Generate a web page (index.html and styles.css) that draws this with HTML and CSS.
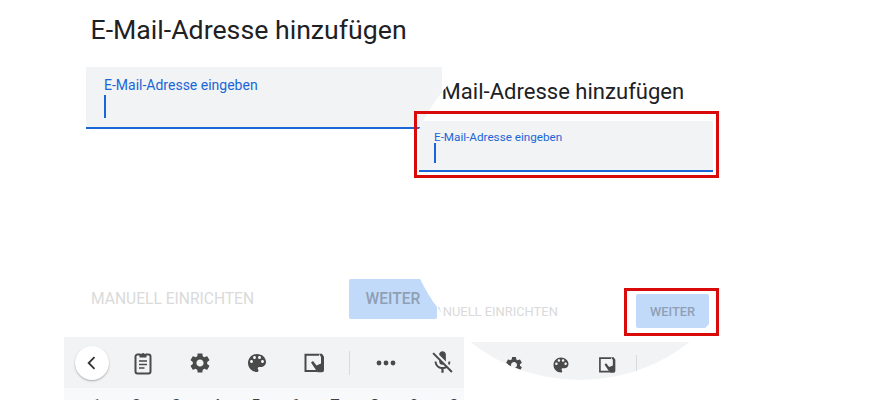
FILE: index.html
```html
<!DOCTYPE html>
<html lang="de">
<head>
<meta charset="utf-8">
<title>E-Mail-Adresse hinzufügen</title>
<link rel="stylesheet" href="styles.css">
</head>
<body>
<svg class="defs" width="0" height="0" aria-hidden="true">
  <symbol id="i-clip" viewBox="0 0 24 24">
    <path d="M9 3.500H6.500A2 2 0 0 0 4.500 5.500v15a2 2 0 0 0 2 2h11a2 2 0 0 0 2-2v-15a2 2 0 0 0-2-2H15" fill="none" stroke="currentColor" stroke-width="2"/>
    <path d="M8.500 2.800h2.200a1.400 1.400 0 0 1 2.600 0h2.200v3.700h-7z" fill="currentColor"/>
    <path d="M8 10h8M8 13.500h8M8 17h5.500" fill="none" stroke="currentColor" stroke-width="1.600"/>
  </symbol>
  <symbol id="i-gear" viewBox="0 0 24 24">
    <path fill-rule="evenodd" fill="currentColor" d="M19.140 12.940c.04-.3.06-.61.06-.94 0-.32-.02-.64-.07-.94l2.030-1.580c.18-.14.23-.41.12-.61l-1.920-3.320c-.12-.22-.37-.29-.59-.22l-2.390.96c-.5-.38-1.030-.7-1.620-.94l-.36-2.540c-.04-.24-.24-.41-.48-.41h-3.840c-.24 0-.43.17-.47.41l-.36 2.540c-.59.24-1.130.57-1.620.94l-2.390-.96c-.22-.08-.47 0-.59.22L2.740 8.870c-.12.21-.08.47.12.61l2.030 1.580c-.05.3-.09.63-.09.94s.02.64.07.94l-2.030 1.580c-.18.14-.23.41-.12.61l1.920 3.320c.12.22.37.29.59.22l2.390-.96c.5.38 1.030.7 1.620.94l.36 2.540c.05.24.24.41.48.41h3.840c.24 0 .44-.17.47-.41l.36-2.540c.59-.24 1.130-.56 1.620-.94l2.390.96c.22.08.47 0 .59-.22l1.920-3.320c.12-.22.07-.47-.12-.61l-2.010-1.580zM12 15.600c-1.980 0-3.600-1.620-3.600-3.600s1.620-3.600 3.600-3.600 3.600 1.620 3.600 3.600-1.620 3.600-3.600 3.600z"/>
  </symbol>
  <symbol id="i-palette" viewBox="0 0 24 24">
    <path fill-rule="evenodd" fill="currentColor" d="M12 3c-4.970 0-9 4.030-9 9s4.030 9 9 9c.83 0 1.500-.67 1.500-1.500 0-.39-.15-.74-.39-1.010-.23-.26-.38-.61-.38-.99 0-.83.67-1.500 1.500-1.500H16c2.760 0 5-2.240 5-5 0-4.420-4.030-8-9-8zm-5.500 9c-.83 0-1.500-.67-1.500-1.500S5.670 9 6.500 9 8 9.670 8 10.500 7.330 12 6.500 12zm3-4C8.670 8 8 7.330 8 6.500S8.670 5 9.500 5s1.500.67 1.500 1.500S10.330 8 9.500 8zm5 0c-.83 0-1.500-.67-1.500-1.500S13.670 5 14.500 5s1.500.67 1.500 1.500S15.330 8 14.500 8zm3 4c-.83 0-1.500-.67-1.500-1.500S16.670 9 17.500 9s1.500.67 1.500 1.500-.67 1.500-1.500 1.500z"/>
  </symbol>
  <symbol id="i-sticker" viewBox="0 0 24 24">
    <path d="M17 3.700H3.500V20H15" fill="none" stroke="currentColor" stroke-width="2"/>
    <path d="M17 2.700h3l2 3v13.500a2 2 0 0 1-2 2h-4.500L9 11.500l2-1.500 3.500 4.500 4.500-2V6z" fill="currentColor"/>
  </symbol>
  <symbol id="i-mic" viewBox="0 0 24 24">
    <path fill="currentColor" d="M19 11h-1.700c0 .74-.16 1.430-.43 2.050l1.230 1.230c.56-.98.9-2.090.9-3.280zm-4.020.17c0-.06.02-.11.02-.17V5c0-1.660-1.340-3-3-3S9 3.340 9 5v.18l5.980 5.990zM4.270 3L3 4.270l6.010 6.010V11c0 1.660 1.330 3 2.990 3 .22 0 .44-.03.65-.08l1.660 1.660c-.71.33-1.500.52-2.310.52-2.760 0-5.300-2.100-5.300-5.100H5c0 3.410 2.720 6.230 6 6.720V21h2v-3.280c.91-.13 1.770-.45 2.540-.9L19.730 21 21 19.730 4.270 3z"/>
  </symbol>
  <symbol id="i-dots" viewBox="0 0 24 24">
    <circle cx="5" cy="12" r="2.400" fill="currentColor"/>
    <circle cx="12" cy="12" r="2.400" fill="currentColor"/>
    <circle cx="19" cy="12" r="2.400" fill="currentColor"/>
  </symbol>
  <symbol id="i-back" viewBox="0 0 24 24">
    <path d="M15 5l-7 7 7 7" fill="none" stroke="currentColor" stroke-width="2.200"/>
  </symbol>
</svg>

<main class="stage">
  <section class="screen">
    <h1 class="title">E-Mail-Adresse hinzufügen</h1>
    <div class="field">
      <div class="field-label">E-Mail-Adresse eingeben</div>
      <div class="caret"></div>
    </div>
    <div class="actions">
      <span class="link">MANUELL EINRICHTEN</span>
      <button class="next" type="button">WEITER</button>
    </div>
    <div class="toolbar">
      <span class="back"><svg class="back-icon"><use href="#i-back"/></svg></span>
      <span class="tool"><svg class="icon"><use href="#i-clip"/></svg></span>
      <span class="tool"><svg class="icon"><use href="#i-gear"/></svg></span>
      <span class="tool"><svg class="icon"><use href="#i-palette"/></svg></span>
      <span class="tool"><svg class="icon"><use href="#i-sticker"/></svg></span>
      <span class="divider"></span>
      <span class="tool tool-dots"><svg class="icon"><use href="#i-dots"/></svg></span>
      <span class="tool"><svg class="icon icon-mic"><use href="#i-mic"/></svg></span>
    </div>
    <div class="digits">
      <span>1</span><span>2</span><span>3</span><span>4</span><span>5</span><span>6</span><span>7</span><span>8</span><span>9</span><span>0</span>
    </div>
  </section>

  <section class="lens">
    <h2 class="lens-title">E-Mail-Adresse hinzufügen</h2>
    <div class="lens-field">
      <div class="lens-label">E-Mail-Adresse eingeben</div>
      <div class="lens-caret"></div>
    </div>
    <div class="lens-actions">
      <span class="lens-link">MANUELL EINRICHTEN</span>
      <button class="lens-next" type="button">WEITER</button>
    </div>
    <div class="lens-toolbar">
      <span class="lens-back"><svg class="lens-back-icon"><use href="#i-back"/></svg></span>
      <span class="lens-tool"><svg class="lens-icon"><use href="#i-clip"/></svg></span>
      <span class="lens-tool"><svg class="lens-icon"><use href="#i-gear"/></svg></span>
      <span class="lens-tool"><svg class="lens-icon"><use href="#i-palette"/></svg></span>
      <span class="lens-tool"><svg class="lens-icon"><use href="#i-sticker"/></svg></span>
      <span class="lens-divider"></span>
      <span class="lens-tool lens-tool-dots"><svg class="lens-icon"><use href="#i-dots"/></svg></span>
      <span class="lens-tool"><svg class="lens-icon"><use href="#i-mic"/></svg></span>
    </div>
  </section>

  <div class="mark mark-field"></div>
  <div class="mark mark-next"></div>
</main>
</body>
</html>
```

FILE: styles.css
```css
* {
  box-sizing: border-box;
}

html,
body {
  margin: 0;
  background: #fff;
}

.defs {
  position: absolute;
}

.stage {
  position: relative;
  width: 879px;
  height: 400px;
  overflow: hidden;
  font-family: Roboto, "Liberation Sans", sans-serif;
}

/* Main screen */
.screen {
  position: absolute;
  left: 64px;
  top: 0;
  width: 400px;
  height: 400px;
  overflow: hidden;
  display: flex;
  flex-direction: column;
}

.title {
  margin: 15px 0 0 26.500px;
  font-size: 26.700px;
  line-height: 30px;
  font-weight: 400;
  color: #202124;
  white-space: nowrap;
}

.field {
  margin: 22px 0 0 22px;
  width: 356px;
  height: 62px;
  padding: 10px 0 0 18px;
  background: #f1f3f4;
  border-bottom: 2px solid #1a66d8;
}

.field-label {
  font-size: 14px;
  line-height: 17px;
  color: #1a66d8;
  white-space: nowrap;
}

.caret {
  width: 2px;
  height: 23px;
  margin-top: 1px;
  background: #1a66d8;
}

.actions {
  margin: 150px 27px 0 27px;
  height: 40px;
  display: flex;
  align-items: center;
  justify-content: space-between;
}

.link {
  font-size: 15.600px;
  font-weight: 400;
  color: #dadada;
  white-space: nowrap;
}

.next {
  width: 88px;
  height: 40px;
  padding: 0;
  border: 0;
  border-radius: 2px;
  background: #c2daf9;
  color: #8f9fb6;
  font: 500 15.600px Roboto, "Liberation Sans", sans-serif;
}

.toolbar {
  margin-top: 18px;
  height: 51px;
  flex: none;
  display: flex;
  align-items: center;
  padding-left: 11px;
  background: #f1f3f4;
  color: #4a4a4a;
}

.back {
  flex: none;
  width: 34px;
  height: 34px;
  margin-right: 5.500px;
  border-radius: 50%;
  background: #fff;
  box-shadow: 0 1px 2px rgba(0, 0, 0, 0.3);
  display: flex;
  align-items: center;
  justify-content: center;
  color: #333;
}

.back-icon {
  width: 20px;
  height: 20px;
}

.tool {
  flex: none;
  width: 57px;
  display: flex;
  justify-content: center;
}

.tool-dots {
  margin-left: 7px;
}

.icon {
  width: 24px;
  height: 24px;
}

.icon-mic {
  width: 27px;
  height: 27px;
  margin-top: -3px;
  margin-bottom: -3px;
}

.divider {
  flex: none;
  width: 1px;
  height: 24px;
  margin-left: 6.500px;
  background: #d9dbdd;
}

.digits {
  flex: none;
  height: 12px;
  padding: 7px 0 0 13px;
  background: #f8f9fa;
  display: flex;
  overflow: hidden;
  font-size: 17px;
  line-height: 20px;
  color: #3c4043;
}

.digits span {
  width: 39.700px;
  flex: none;
  text-align: center;
}

/* Magnified circle */
.lens {
  position: absolute;
  left: 403px;
  top: 26px;
  width: 354px;
  height: 354px;
  border-radius: 50%;
  overflow: hidden;
  background: #fff;
  display: flex;
  flex-direction: column;
}

.lens-title {
  margin: 53px 0 0 20px;
  font-size: 22.050px;
  line-height: 25px;
  font-weight: 400;
  color: #202124;
  white-space: nowrap;
}

.lens-field {
  flex: none;
  margin: 17px 0 0 16px;
  width: 294px;
  height: 51px;
  padding: 9px 0 0 15px;
  background: #f1f3f4;
  border-bottom: 2px solid #1a66d8;
}

.lens-label {
  font-size: 11.700px;
  line-height: 14px;
  color: #1a66d8;
  white-space: nowrap;
}

.lens-caret {
  width: 2px;
  height: 20px;
  margin-top: -1px;
  background: #1a66d8;
}

.lens-actions {
  flex: none;
  margin: 122px 48px 0 20px;
  height: 34px;
  display: flex;
  align-items: center;
  justify-content: space-between;
}

.lens-link {
  font-size: 12.900px;
  font-weight: 400;
  color: #dadada;
  white-space: nowrap;
}

.lens-next {
  width: 73px;
  height: 34px;
  padding: 0;
  border: 0;
  border-radius: 2px;
  background: #c2daf9;
  color: #8f9fb6;
  font: 500 12.800px Roboto, "Liberation Sans", sans-serif;
}

.lens-toolbar {
  flex: none;
  margin-top: 14px;
  height: 46px;
  display: flex;
  align-items: center;
  padding-left: 10px;
  background: #f1f3f4;
  color: #4a4a4a;
}

.lens-back {
  flex: none;
  width: 28px;
  height: 28px;
  margin-right: 3.500px;
  border-radius: 50%;
  background: #fff;
  display: flex;
  align-items: center;
  justify-content: center;
  color: #333;
}

.lens-back-icon {
  width: 16px;
  height: 16px;
}

.lens-tool {
  flex: none;
  width: 46.500px;
  display: flex;
  justify-content: center;
}

.lens-tool-dots {
  margin-left: 7px;
}

.lens-icon {
  width: 20px;
  height: 20px;
}

.lens-divider {
  flex: none;
  width: 1px;
  height: 20px;
  margin-left: 5.500px;
  background: #d9dbdd;
}

/* Red highlight frames */
.mark {
  position: absolute;
  border: 3px solid #d90a0a;
}

.mark-field {
  left: 414px;
  top: 111px;
  width: 305px;
  height: 67px;
}

.mark-next {
  left: 624px;
  top: 288px;
  width: 95px;
  height: 48px;
}
```
